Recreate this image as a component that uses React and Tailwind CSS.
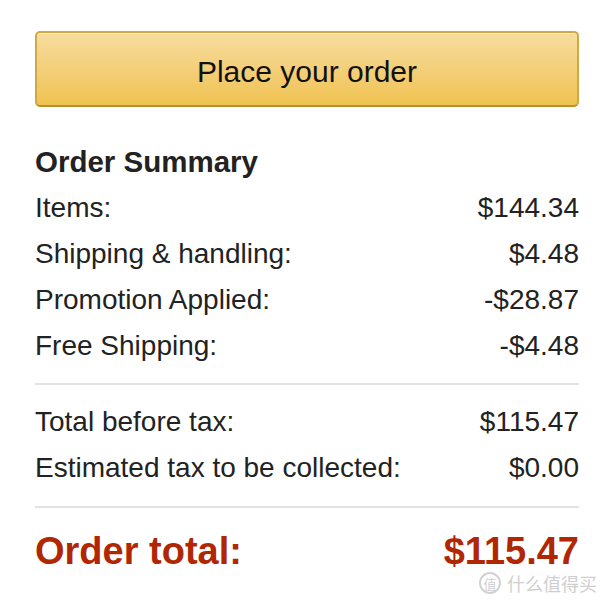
import React from 'react';

const topRows = [
  { label: 'Items:', value: '$144.34' },
  { label: 'Shipping & handling:', value: '$4.48' },
  { label: 'Promotion Applied:', value: '-$28.87' },
  { label: 'Free Shipping:', value: '-$4.48' },
];

const taxRows = [
  { label: 'Total before tax:', value: '$115.47' },
  { label: 'Estimated tax to be collected:', value: '$0.00' },
];

function Row({ label, value }) {
  return (
    <div className="flex justify-between items-center h-[46px] text-[28px] text-[#222]">
      <span>{label}</span>
      <span>{value}</span>
    </div>
  );
}

export default function App() {
  return (
    <div
      className="relative w-[600px] h-[600px] bg-white overflow-hidden pt-[31px] pl-[35px] pr-[21px]"
      style={{ fontFamily: '"Liberation Sans", Arial, sans-serif' }}
    >
      {/* Place order button */}
      <button className="w-full h-[76px] rounded-[5px] border-2 border-[#d0a845] border-b-[#b98f30] bg-gradient-to-b from-[#f7dc9d] to-[#f0c24f] shadow-[inset_0_1px_0_rgba(255,255,255,0.45)] text-[30px] text-[#111] flex items-center justify-center pt-[5px]">
        Place your order
      </button>

      {/* Summary */}
      <div className="mt-[32px]">
        <h2 className="h-[46px] flex items-center text-[29.5px] font-bold text-[#222]">Order Summary</h2>
        {topRows.map(r => <Row key={r.label} {...r} />)}
        <div className="mt-[14px] mb-[14px] h-[2px] bg-[#e2e2e2]" />
        {taxRows.map(r => <Row key={r.label} {...r} />)}
        <div className="mt-[15px] h-[2px] bg-[#e2e2e2]" />
        <div className="flex justify-between items-center h-[86px] text-[38px] font-bold text-[#b12704]">
          <span>Order total:</span>
          <span>$115.47</span>
        </div>
      </div>

      {/* watermark */}
      <div
        className="absolute right-[3px] bottom-[6px] flex items-center gap-[6px] text-[#cfcfcf]"
        style={{ fontFamily: '"Noto Sans CJK SC", sans-serif' }}
      >
        <span className="w-[22px] h-[22px] rounded-full border-2 border-[#d2d2d2] flex items-center justify-center text-[13px] leading-none">值</span>
        <span className="text-[18px] leading-none">什么值得买</span>
      </div>
    </div>
  );
}
